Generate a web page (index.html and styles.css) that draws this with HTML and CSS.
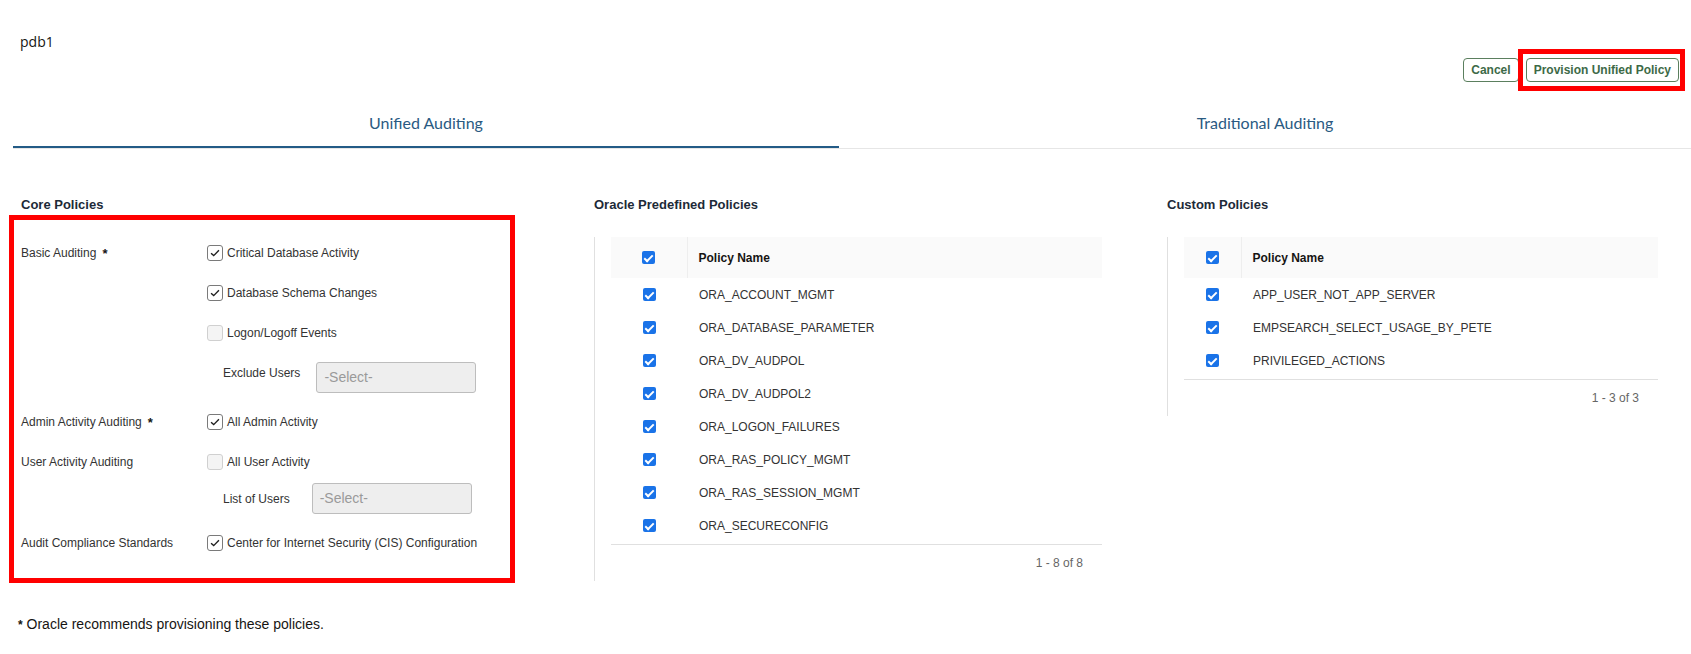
FILE: index.html
```html
<!DOCTYPE html>
<html lang="en">
<head>
<meta charset="utf-8">
<title>pdb1 - Unified Auditing</title>
<link rel="stylesheet" href="styles.css">
</head>
<body>
<div class="title">pdb1</div>
<div class="actions">
  <button class="btn">Cancel</button>
  <span class="highlight"><button class="btn">Provision Unified Policy</button></span>
</div>
<div class="tabs">
  <div class="tab tab-first active">Unified Auditing</div>
  <div class="tab">Traditional Auditing</div>
</div>

<div class="columns">
  <section class="col">
    <h2 class="heading core-heading">Core Policies</h2>
    <div class="core-box">
      <div class="core-row">
        <div class="core-label">Basic Auditing <span class="req">*</span></div>
        <div class="core-options">
          <div class="opt"><span class="cb"><svg viewBox="0 0 16 16"><path d="M3.5 8.2 L6.5 11 L12.5 4.8"/></svg></span>Critical Database Activity</div>
          <div class="opt"><span class="cb"><svg viewBox="0 0 16 16"><path d="M3.5 8.2 L6.5 11 L12.5 4.8"/></svg></span>Database Schema Changes</div>
          <div class="opt"><span class="cb cb-off"></span>Logon/Logoff Events</div>
          <div class="sub"><span class="sub-label">Exclude Users</span><span class="select">-Select-</span></div>
        </div>
      </div>
      <div class="core-row">
        <div class="core-label">Admin Activity Auditing <span class="req">*</span></div>
        <div class="core-options">
          <div class="opt"><span class="cb"><svg viewBox="0 0 16 16"><path d="M3.5 8.2 L6.5 11 L12.5 4.8"/></svg></span>All Admin Activity</div>
        </div>
      </div>
      <div class="core-row">
        <div class="core-label">User Activity Auditing</div>
        <div class="core-options">
          <div class="opt"><span class="cb cb-off"></span>All User Activity</div>
          <div class="sub sub-tight"><span class="sub-label">List of Users</span><span class="select">-Select-</span></div>
        </div>
      </div>
      <div class="core-row">
        <div class="core-label">Audit Compliance Standards</div>
        <div class="core-options">
          <div class="opt"><span class="cb"><svg viewBox="0 0 16 16"><path d="M3.5 8.2 L6.5 11 L12.5 4.8"/></svg></span>Center for Internet Security (CIS) Configuration</div>
        </div>
      </div>
    </div>
  </section>

  <section class="col">
    <h2 class="heading">Oracle Predefined Policies</h2>
    <div class="grid-wrap">
      <table class="ptable">
        <thead>
          <tr><th class="c-check c-wide"><span class="bcb"></span></th><th class="c-name">Policy Name</th></tr>
        </thead>
        <tbody>
          <tr><td class="c-check"><span class="bcb"></span></td><td class="c-name">ORA_ACCOUNT_MGMT</td></tr>
          <tr><td class="c-check"><span class="bcb"></span></td><td class="c-name">ORA_DATABASE_PARAMETER</td></tr>
          <tr><td class="c-check"><span class="bcb"></span></td><td class="c-name">ORA_DV_AUDPOL</td></tr>
          <tr><td class="c-check"><span class="bcb"></span></td><td class="c-name">ORA_DV_AUDPOL2</td></tr>
          <tr><td class="c-check"><span class="bcb"></span></td><td class="c-name">ORA_LOGON_FAILURES</td></tr>
          <tr><td class="c-check"><span class="bcb"></span></td><td class="c-name">ORA_RAS_POLICY_MGMT</td></tr>
          <tr><td class="c-check"><span class="bcb"></span></td><td class="c-name">ORA_RAS_SESSION_MGMT</td></tr>
          <tr><td class="c-check"><span class="bcb"></span></td><td class="c-name">ORA_SECURECONFIG</td></tr>
        </tbody>
      </table>
      <div class="pager">1 - 8 of 8</div>
    </div>
  </section>

  <section class="col">
    <h2 class="heading">Custom Policies</h2>
    <div class="grid-wrap">
      <table class="ptable">
        <thead>
          <tr><th class="c-check c-narrow"><span class="bcb"></span></th><th class="c-name">Policy Name</th></tr>
        </thead>
        <tbody>
          <tr><td class="c-check"><span class="bcb"></span></td><td class="c-name">APP_USER_NOT_APP_SERVER</td></tr>
          <tr><td class="c-check"><span class="bcb"></span></td><td class="c-name">EMPSEARCH_SELECT_USAGE_BY_PETE</td></tr>
          <tr><td class="c-check"><span class="bcb"></span></td><td class="c-name">PRIVILEGED_ACTIONS</td></tr>
        </tbody>
      </table>
      <div class="pager">1 - 3 of 3</div>
    </div>
  </section>
</div>

<p class="footnote"><span class="star">*</span> Oracle recommends provisioning these policies.</p>
</body>
</html>
```

FILE: styles.css
```css
* { box-sizing: border-box; }

body {
  margin: 0;
  background: #ffffff;
  font-family: "Liberation Sans", Arial, sans-serif;
  color: #333333;
}

.title {
  padding: 34px 0 0 20px;
  height: 49px;
  font-family: "Open Sans", "Liberation Sans", sans-serif;
  font-size: 14px;
  line-height: 16px;
  color: #161513;
}

.actions {
  display: flex;
  justify-content: flex-end;
  align-items: center;
  padding-right: 6px;
  height: 42px;
}

.btn {
  height: 24px;
  padding: 0 7px;
  border: 1px solid #5b7f5e;
  border-radius: 4px;
  background: #ffffff;
  font-family: "Liberation Sans", Arial, sans-serif;
  font-size: 12px;
  font-weight: bold;
  color: #3d6a47;
  line-height: 22px;
}

.highlight {
  display: flex;
  align-items: center;
  margin-left: -1px;
  height: 42px;
  padding: 0 1px 0 3px;
  border: 5px solid #ff0000;
}

.tabs {
  display: flex;
  margin: 9px 0 0 13px;
  border-bottom: 1px solid #e6e6e6;
}

.tab {
  flex: 1;
  text-align: center;
  padding: 13px 0 13px;
  border-bottom: 2px solid transparent;
  font-family: "Lato", "Open Sans", sans-serif;
  font-size: 16px;
  line-height: 20px;
  color: #2a5a82;
}

.tab-first {
  flex: 0 0 826px;
}

.tab.active {
  border-bottom-color: #235b86;
}

.columns {
  display: grid;
  grid-template-columns: 535px 525px 508px;
  column-gap: 48px;
  margin: 46px 0 0 11px;
  align-items: start;
}

.heading {
  margin: 0;
  font-size: 13px;
  font-weight: bold;
  line-height: 20px;
  color: #1d2a38;
}

.core-heading {
  padding-left: 10px;
}

.core-box {
  width: 506px;
  margin-left: -2px;
  border: 5px solid #ff0000;
  padding: 13px 0 15px 7px;
}

.core-row {
  display: flex;
  align-items: flex-start;
}

.core-label {
  width: 186px;
  height: 40px;
  display: flex;
  align-items: center;
  gap: 6px;
  font-size: 12px;
  color: #333333;
}

.req {
  font-weight: bold;
  font-size: 13px;
  color: #161513;
}

.core-options {
  display: flex;
  flex-direction: column;
}

.opt {
  height: 40px;
  display: flex;
  align-items: center;
  gap: 4px;
  font-size: 12px;
  color: #333333;
}

.cb {
  width: 16px;
  height: 16px;
  border: 1px solid #7a7a7a;
  border-radius: 3px;
  background: #ffffff;
  display: flex;
  align-items: center;
  justify-content: center;
}

.cb svg {
  width: 14px;
  height: 14px;
  fill: none;
  stroke: #1f1f1f;
  stroke-width: 1.6;
}

.cb-off {
  border-color: #d0d0d0;
  background: #f4f4f4;
}

.sub {
  display: flex;
  align-items: flex-start;
  margin: 9px 0;
  padding-left: 16px;
}

.sub-label {
  padding-top: 4px;
  margin-right: 16px;
  font-size: 12px;
  line-height: 14px;
  color: #333333;
}

.sub-tight {
  margin: 1px 0 9px;
}

.sub-tight .sub-label {
  padding-top: 9px;
  margin-right: 22px;
}

.select {
  width: 160px;
  height: 31px;
  padding-left: 7px;
  border: 1px solid #bdbdbd;
  border-radius: 3px;
  background: #eeeeee;
  font-size: 14px;
  line-height: 29px;
  color: #9a9a9a;
}

.grid-wrap {
  margin-top: 22px;
  border-left: 1px solid #e0e0e0;
  padding: 0 17px 0 16px;
}

.ptable {
  width: 100%;
  border-collapse: collapse;
  font-size: 12px;
}

.ptable th {
  height: 41px;
  background: #fafafa;
  text-align: left;
  font-weight: bold;
  color: #161513;
  padding: 0;
}

.ptable td {
  height: 33px;
  padding: 0;
  color: #333333;
}

.c-check {
  text-align: center;
}

.c-wide { width: 76px; }
.c-narrow { width: 57px; }

.ptable th.c-name {
  border-left: 1px solid #eeeeee;
  padding-left: 11px;
}

.ptable td.c-name {
  padding-left: 12px;
}

.bcb {
  display: block;
  width: 13px;
  height: 13px;
  margin: 0 auto;
  border-radius: 2px;
  background: #1a73e8;
  position: relative;
}

.bcb::after {
  content: "";
  position: absolute;
  left: 4px;
  top: 1.5px;
  width: 3px;
  height: 7px;
  border: solid #ffffff;
  border-width: 0 2px 2px 0;
  transform: rotate(45deg);
}

.pager {
  margin-top: 2px;
  border-top: 1px solid #e0e0e0;
  height: 37px;
  line-height: 36px;
  text-align: right;
  padding-right: 19px;
  font-size: 12px;
  color: #666666;
}

.footnote {
  margin: 31px 0 0 18px;
  font-size: 14px;
  line-height: 20px;
  color: #161513;
}

.star {
  font-size: 12px;
  font-weight: bold;
}
```
